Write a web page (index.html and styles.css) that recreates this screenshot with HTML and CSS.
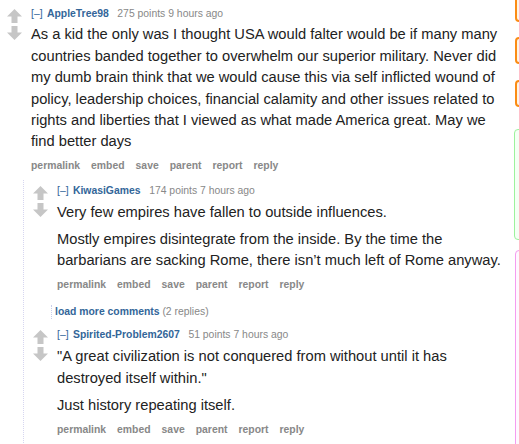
FILE: index.html
```html
<!DOCTYPE html>
<html lang="en">
<head>
<meta charset="utf-8">
<title>Comments</title>
<link rel="stylesheet" href="styles.css">
</head>
<body>
<div class="page">
  <div class="main">
    <div class="comment top">
      <div class="midcol">
        <svg class="arrow" viewBox="0 0 15 14" width="15" height="14"><path d="M7.5 0 L15 7.5 H10.5 V14 H4.5 V7.5 H0 Z"/></svg>
        <svg class="arrow" viewBox="0 0 15 14" width="15" height="14"><path d="M7.5 14 L15 6.5 H10.5 V0 H4.5 V6.5 H0 Z"/></svg>
      </div>
      <div class="entry">
        <p class="tagline"><a class="expand">[–]</a><a class="author">AppleTree98</a><span class="score">275 points 9 hours ago</span></p>
        <div class="md">
          <p>As a kid the only was I thought USA would falter would be if many many countries banded together to overwhelm our superior military. Never did my dumb brain think that we would cause this via self inflicted wound of policy, leadership choices, financial calamity and other issues related to rights and liberties that I viewed as what made America great. May we find better days</p>
        </div>
        <ul class="buttons"><li>permalink</li><li>embed</li><li>save</li><li>parent</li><li>report</li><li>reply</li></ul>
      </div>
    </div>

    <div class="child">
      <div class="comment">
        <div class="midcol">
          <svg class="arrow" viewBox="0 0 15 14" width="15" height="14"><path d="M7.5 0 L15 7.5 H10.5 V14 H4.5 V7.5 H0 Z"/></svg>
          <svg class="arrow" viewBox="0 0 15 14" width="15" height="14"><path d="M7.5 14 L15 6.5 H10.5 V0 H4.5 V6.5 H0 Z"/></svg>
        </div>
        <div class="entry">
          <p class="tagline"><a class="expand">[–]</a><a class="author">KiwasiGames</a><span class="score">174 points 7 hours ago</span></p>
          <div class="md">
            <p>Very few empires have fallen to outside influences.</p>
            <p>Mostly empires disintegrate from the inside. By the time the barbarians are sacking Rome, there isn’t much left of Rome anyway.</p>
          </div>
          <ul class="buttons"><li>permalink</li><li>embed</li><li>save</li><li>parent</li><li>report</li><li>reply</li></ul>
        </div>
      </div>

      <div class="morechildren"><a class="more">load more comments</a> <span class="gray">(2 replies)</span></div>

      <div class="comment third">
        <div class="midcol">
          <svg class="arrow" viewBox="0 0 15 14" width="15" height="14"><path d="M7.5 0 L15 7.5 H10.5 V14 H4.5 V7.5 H0 Z"/></svg>
          <svg class="arrow" viewBox="0 0 15 14" width="15" height="14"><path d="M7.5 14 L15 6.5 H10.5 V0 H4.5 V6.5 H0 Z"/></svg>
        </div>
        <div class="entry">
          <p class="tagline"><a class="expand">[–]</a><a class="author">Spirited-Problem2607</a><span class="score">51 points 7 hours ago</span></p>
          <div class="md">
            <p>"A great civilization is not conquered from without until it has destroyed itself within."</p>
            <p>Just history repeating itself.</p>
          </div>
          <ul class="buttons"><li>permalink</li><li>embed</li><li>save</li><li>parent</li><li>report</li><li>reply</li></ul>
        </div>
      </div>
    </div>
  </div>

  <aside class="side">
    <div class="box orange first"></div>
    <div class="box orange second"></div>
    <div class="box orange third-box"></div>
    <div class="box green"></div>
    <div class="box pink"></div>
  </aside>
</div>
</body>
</html>
```

FILE: styles.css
```css
html, body {
  margin: 0;
  padding: 0;
  background: #fff;
  overflow: hidden;
}

body {
  font-family: "Liberation Sans", Arial, sans-serif;
  color: #222;
}

.page {
  display: flex;
  width: 519px;
  height: 444px;
  overflow: hidden;
}

.main {
  width: 514px;
  flex: none;
}

.comment {
  display: flex;
  align-items: flex-start;
}

.comment.top {
  padding: 7px 0 0 7px;
}

.midcol {
  width: 24px;
  flex: none;
  display: flex;
  flex-direction: column;
  gap: 3px;
  padding-top: 2px;
}

.arrow {
  display: block;
  fill: #c6c6c6;
}

.entry {
  flex: 1;
  min-width: 0;
  padding-right: 6px;
}

.tagline {
  margin: 0 0 3.3px;
  font-size: 10.4px;
  line-height: 14px;
  color: #888;
  white-space: nowrap;
}

.third .tagline {
  margin-bottom: 4.3px;
}

.expand {
  color: #369;
  margin-right: 4.4px;
}

.author {
  color: #369;
  font-weight: bold;
  margin-right: 8.6px;
}

.md {
  font-size: 14.7px;
  line-height: 21.4px;
  color: #222;
}

.md p {
  margin: 0 0 5.6px;
}

.md p:last-child {
  margin-bottom: 0;
}

.buttons {
  list-style: none;
  margin: 6.6px 0 0;
  padding: 0;
  display: flex;
  gap: 11px;
  font-size: 10.4px;
  line-height: 14px;
  font-weight: bold;
  color: #888;
}

.child {
  margin: 7px 0 0 23px;
  border-left: 1px dotted #d6d6f0;
  padding-bottom: 40px;
}

.child .comment {
  padding-left: 9px;
  padding-top: 4px;
}

.child .comment.third {
  padding-top: 9px;
}

.morechildren {
  margin: 13px 0 0 27px;
  padding-left: 3px;
  border-left: 1px dotted #c8cdea;
  font-size: 10.4px;
  line-height: 14px;
}

.more {
  color: #369;
  font-weight: bold;
}

.gray {
  color: #888;
}

.side {
  flex: none;
  width: 5px;
  display: flex;
  flex-direction: column;
}

.box {
  width: 24px;
  flex: none;
  box-sizing: border-box;
  border-radius: 4px;
  margin-left: 1px;
}

.orange {
  border: 2px solid #fb8c14;
  background: #fff4e6;
}

.orange.first {
  margin-top: -8px;
  height: 30px;
}

.orange.second {
  margin-top: 15px;
  height: 27px;
}

.orange.third-box {
  margin-top: 16px;
  height: 27px;
}

.green {
  margin-top: 22px;
  margin-left: 0;
  height: 111px;
  border: 1px solid #9cf29c;
  background: #f5fff5;
}

.pink {
  margin-top: 10px;
  height: 220px;
  border: 1px solid #f59cf0;
  background: #fff7fe;
}
```
